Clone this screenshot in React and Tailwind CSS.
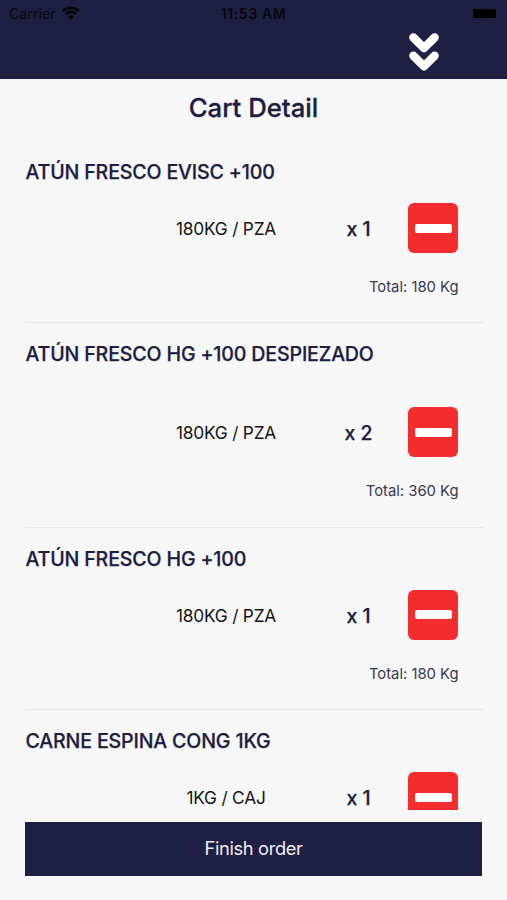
import { useState } from "react";
import clsx from "clsx";

const products = [
  { id: 1, name: "ATÚN FRESCO EVISC +100", unit: "180KG / PZA", qty: 1, total: "180 Kg" },
  { id: 2, name: "ATÚN FRESCO HG +100 DESPIEZADO", unit: "180KG / PZA", qty: 2, total: "360 Kg", tall: true },
  { id: 3, name: "ATÚN FRESCO HG +100", unit: "180KG / PZA", qty: 1, total: "180 Kg" },
  { id: 4, name: "CARNE ESPINA CONG 1KG", unit: "1KG / CAJ", qty: 1, total: "1 Kg" },
];

const WifiIcon = () => (
  <svg width="18" height="14" viewBox="0 0 18 14" fill="none" stroke="#050508">
    <path d="M1 5.1C5.6 0.6 12.4 0.6 17 5.1" strokeWidth="2.6" />
    <path d="M3.9 8.1C6.8 5.3 11.2 5.3 14.1 8.1" strokeWidth="2.3" />
    <path d="M9 13.5L6.1 10.5C7.7 8.9 10.3 8.9 11.9 10.5Z" fill="#050508" stroke="none" />
  </svg>
);

const CloseIcon = () => (
  <svg width="30" height="38" viewBox="0 0 30 38" fill="none" stroke="#fff" strokeWidth="8.4" strokeLinecap="round" strokeLinejoin="round">
    <path d="M4.4 4.5L15 15L25.6 4.5" />
    <path d="M4.4 22.7L15 33.2L25.6 22.7" />
  </svg>
);

const CartItem = ({ item, onRemove }) => (
  <li
    className={clsx(
      "flex shrink-0 flex-col border-b border-[#e9e9ea]",
      item.tall ? "h-[204.5px]" : "h-[182.3px]"
    )}
  >
    <h2 className="mt-[17px] ml-[0.5px] h-7 whitespace-nowrap text-[19.6px] leading-7 font-medium tracking-[-0.16px] text-[#1d1d42] [-webkit-text-stroke:0.25px]">
      {item.name}
    </h2>
    <div className={clsx("flex h-[50px] items-center", item.tall ? "mt-[39px]" : "mt-[17px]")}>
      <p className="ml-[125px] w-[152px] pt-[2px] text-center text-[17.3px] tracking-[-0.2px] text-[#151515]">
        {item.unit}
      </p>
      <p className="ml-[31.5px] w-[50px] pt-[3px] text-center text-[19.5px] font-medium text-[#1d1d42] [-webkit-text-stroke:0.25px]">
        x {item.qty}
      </p>
      <button
        type="button"
        onClick={() => onRemove(item.id)}
        className="ml-[24.5px] flex size-[50px] items-center justify-center rounded-[6px] bg-[#f42c2d]"
      >
        <span className="h-[9px] w-[37px] rounded-[2px] bg-white" />
      </button>
    </div>
    <p className="mt-[22px] mr-[25.5px] text-right text-[14.8px] leading-6 text-[#393953]">
      Total: {item.total}
    </p>
  </li>
);

const App = () => {
  const [items, setItems] = useState(products);

  // take one piece away, drop the line when nothing is left
  const handleRemove = (id) => {
    setItems(
      items
        .map((item) => (item.id === id ? { ...item, qty: item.qty - 1 } : item))
        .filter((item) => item.qty > 0)
    );
  };

  return (
    <div className="flex h-[900px] w-[507px] flex-col overflow-hidden bg-[#f7f7f7] font-['Inter',sans-serif]">
      <header className="h-[79px] shrink-0 bg-[#1e1f42]">
        {/* Status bar */}
        <div className="grid h-[27px] grid-cols-3 items-center px-[9px] text-[#08080f]">
          <div className="flex items-center gap-[6px]">
            <span className="text-[14.2px]">Carrier</span>
            <WifiIcon />
          </div>
          <span className="text-center text-[14px] font-semibold tracking-[0.6px]">11:53 AM</span>
          <span className="mr-[2px] h-[9px] w-[23px] justify-self-end rounded-[1px] bg-black" />
        </div>
        <div className="flex justify-end pt-[6px] pr-[68px]">
          <button type="button">
            <CloseIcon />
          </button>
        </div>
      </header>

      <h1 className="mt-[11px] h-9 shrink-0 text-center text-[25.7px] leading-9 font-medium text-[#1d1d42] [-webkit-text-stroke:0.3px]">
        Cart Detail
      </h1>

      <ul className="mt-[15px] mr-[23px] ml-[25px] flex h-[669px] shrink-0 flex-col overflow-y-auto [scrollbar-width:none]">
        {items.map((item) => (
          <CartItem key={item.id} item={item} onRemove={handleRemove} />
        ))}
      </ul>

      <button
        type="button"
        className="mt-[12px] mr-[25px] ml-[25px] h-[54px] shrink-0 bg-[#1e1f42] text-[18.3px] tracking-[-0.35px] text-[#ededf2]"
      >
        Finish order
      </button>
    </div>
  );
};

export default App;
